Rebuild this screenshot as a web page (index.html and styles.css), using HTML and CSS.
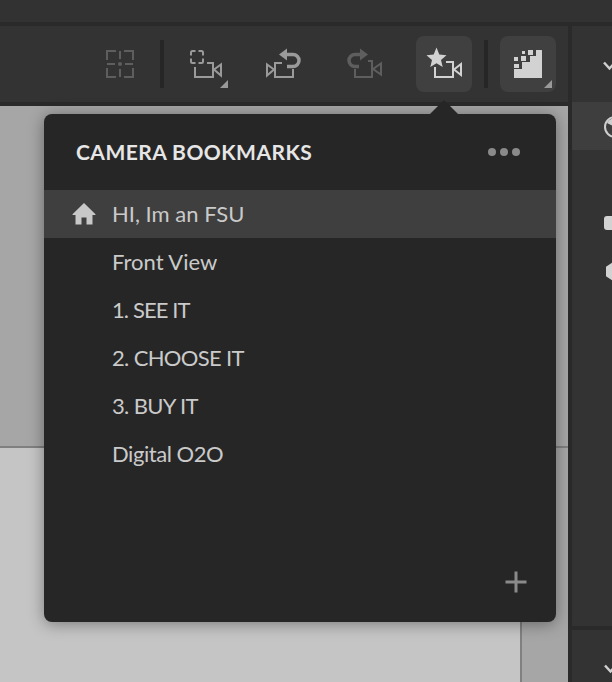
FILE: index.html
```html
<!DOCTYPE html>
<html lang="en">
<head>
<meta charset="utf-8">
<title>Camera Bookmarks</title>
<link rel="stylesheet" href="styles.css">
</head>
<body>
<div class="app">
  <div class="topbar"></div>
  <div class="workspace">
    <div class="main">
      <div class="toolbar">
        <button class="tool"><svg class="ico off" viewBox="0 0 56 56"><path d="M15 24V15H24M32 15H41V24M41 32V41H32M24 41H15V32M28 15V23M28 33V41M15 28H23M33 28H41"/><circle class="fill" cx="28" cy="28" r="2"/></svg></button>
        <span class="sep"></span>
        <button class="tool"><svg class="ico" viewBox="0 0 56 56"><path d="M15 19.500V16.500A1.500 1.500 0 0 1 16.500 15H19.500M22.500 15H25.500A1.500 1.500 0 0 1 27 16.500V19.500M27 22.500V25.500A1.500 1.500 0 0 1 25.500 27H22.500M19.500 27H16.500A1.500 1.500 0 0 1 15 25.500V22.500"/><path d="M19 31V41H37V27H31M38 33.500L45 28.500V39.500Z"/><path class="fill" d="M52 44V52H44Z"/></svg></button>
        <button class="tool"><svg class="ico" viewBox="0 0 56 56"><path d="M26 27H19V41H37V33M18 33.500L11 28.500V39.500Z"/><path class="thick" d="M29 18.500H37A6 6 0 0 1 37 30.500H31"/><path class="fill" d="M23 18.500L31 12.500V24.500Z"/></svg></button>
        <button class="tool"><svg class="ico off" viewBox="0 0 56 56"><path d="M19 33V41H36V25H32M37 33L45 27.500V38.500Z"/><path class="thick" d="M26 18.500H19A6 6 0 0 0 19 30.500H23"/><path class="fill" d="M32 18.500L24 12.500V24.500Z"/></svg></button>
        <button class="tool on"><svg class="ico bright" viewBox="0 0 56 56"><path class="fill" d="M20.500 11.500L23.300 18.600 30.500 19.200 25 24 26.700 31 20.500 27.200 14.300 31 16 24 10.500 19.200 17.700 18.600Z"/><path d="M19 31V41H37V26H30M38 33.500L45 28V39Z"/></svg></button>
        <span class="sep"></span>
        <button class="tool on"><svg class="ico bright" viewBox="0 0 56 56"><path class="fill" d="M36 14H41.500A.5.5 0 0 1 42 14.500V42H14V33H22V26H30V20H36Z"/><path class="fill" d="M28 14H33V19H28ZM22 15H25V18H22ZM14 21H18V25H14ZM21 20H26V25H21ZM14 28H19V32H14Z"/><path class="corner" d="M52 44V52H44Z"/></svg></button>
      </div>
      <div class="canvas">
        <div class="canvas-top"></div>
        <div class="canvas-bottom"><div class="page"></div></div>
      </div>
    </div>
    <aside class="inspector">
      <div class="section-head"><svg class="chevron" viewBox="0 0 16 12"><path d="M1 1.500L6.500 7.500 12 1.500"/></svg></div>
      <div class="section-row"><svg class="dial" viewBox="0 0 24 24"><circle cx="12" cy="12" r="10"/><path class="fill" d="M12 12L4 8A9 9 0 0 1 12 3Z"/></svg></div>
      <div class="section-body">
        <span class="chip"></span>
        <span class="hex"></span>
      </div>
      <div class="section-foot"><svg class="chevron" viewBox="0 0 16 12"><path d="M1 1.500L6.500 7.500 12 1.500"/></svg></div>
    </aside>
  </div>
  <section class="popover">
    <header class="pop-head">
      <h2 class="pop-title">CAMERA BOOKMARKS</h2>
      <div class="dots"><span></span><span></span><span></span></div>
    </header>
    <ul class="list">
      <li class="item selected"><svg class="home" viewBox="0 0 24 24"><path d="M12 1L23.500 12.200Q24 13 23 13H20.500V22.500H14.500V15.500H9.500V22.500H3.500V13H1Q0 13 .5 12.200Z"/></svg><span>HI, Im an FSU</span></li>
      <li class="item"><i class="slot"></i><span>Front View</span></li>
      <li class="item"><i class="slot"></i><span class="tight-more">1. SEE IT</span></li>
      <li class="item"><i class="slot"></i><span class="tight">2. CHOOSE IT</span></li>
      <li class="item"><i class="slot"></i><span class="tight">3. BUY IT</span></li>
      <li class="item"><i class="slot"></i><span class="tight-less">Digital O2O</span></li>
    </ul>
    <footer class="pop-foot"><svg class="plus" viewBox="0 0 24 24"><path d="M12 1.500V22.500M1.500 12H22.500"/></svg></footer>
  </section>
</div>
</body>
</html>
```
FILE: styles.css
```css
* { box-sizing: border-box; }
html, body { margin: 0; padding: 0; }
body { width: 612px; height: 682px; overflow: hidden; background: #2a2a2a; font-family: "Lato", "Noto Sans", sans-serif; }
.app { position: relative; width: 612px; height: 682px; display: flex; flex-direction: column; }
.topbar { height: 26px; flex: none; background: #323232; border-bottom: 4px solid #2a2a2a; }
.workspace { flex: 1; display: flex; min-height: 0; }
.main { width: 568px; flex: none; display: flex; flex-direction: column; }
.toolbar { height: 80px; flex: none; background: #333; border-bottom: 4px solid #2a2a2a; display: flex; align-items: flex-start; justify-content: flex-end; gap: 24px; padding: 10px 12px 0 0; }
.tool { width: 56px; height: 56px; padding: 0; border: 0; border-radius: 8px; background: transparent; }
.tool.on { background: #404040; }
.sep { width: 4px; height: 48px; margin: 4px -12px 0; background: #262626; }
.ico { display: block; width: 56px; height: 56px; fill: none; stroke: #9a9a9a; stroke-width: 2; }
.ico .fill { fill: #9a9a9a; stroke: none; }
.ico .thick { stroke-width: 3.500; }
.ico.off { stroke: #5e5e5e; }
.ico.off .fill { fill: #5e5e5e; }
.ico.bright { stroke: #d2d2d2; }
.ico.bright .fill { fill: #d2d2d2; }
.ico .corner { fill: #9a9a9a; stroke: none; }
.canvas { flex: 1; display: flex; flex-direction: column; background: #a6a6a6; }
.canvas-top { height: 342px; flex: none; border-bottom: 2px solid #808080; }
.canvas-bottom { flex: 1; }
.page { width: 522px; height: 100%; background: #c5c5c5; border-right: 2px solid #808080; }
.inspector { flex: 1; border-left: 4px solid #2a2a2a; display: flex; flex-direction: column; overflow: hidden; }
.section-head { height: 76px; flex: none; background: #333; padding: 35px 0 0 31px; }
.section-row { height: 48px; flex: none; background: #3e3e3e; padding: 13px 0 0 31px; }
.section-body { flex: 1; background: #333; display: flex; flex-direction: column; align-items: flex-start; padding: 66px 0 0 32px; border-bottom: 4px solid #2a2a2a; }
.section-foot { height: 52px; flex: none; background: #333; padding: 34px 0 0 32px; }
.chevron { display: block; width: 16px; height: 12px; flex: none; fill: none; stroke: #cfcfcf; stroke-width: 2.500; }
.dial { display: block; width: 24px; height: 24px; flex: none; fill: none; stroke: #cfcfcf; stroke-width: 2; }
.dial .fill { fill: #cfcfcf; stroke: none; }
.chip { display: block; width: 14px; height: 14px; flex: none; border-radius: 3px; background: #d2d2d2; }
.hex { display: block; width: 14px; height: 19px; flex: none; margin: 32px 0 0 2px; background: #d2d2d2; clip-path: polygon(50% 0, 100% 25%, 100% 75%, 50% 100%, 0 75%, 0 25%); }
.popover { position: absolute; left: 44px; top: 114px; width: 512px; height: 508px; background: #262626; border-radius: 8px; box-shadow: 0 2px 16px rgba(0, 0, 0, .38); display: flex; flex-direction: column; }
.popover::before { content: ""; position: absolute; left: 386px; top: -14px; width: 28px; height: 14px; background: #262626; clip-path: polygon(50% 0, 100% 100%, 0 100%); }
.pop-head { height: 76px; flex: none; display: flex; align-items: center; justify-content: space-between; padding: 0 36px 0 32px; }
.pop-title { margin: 0 0 2px; font-size: 21px; font-weight: 700; color: #e6e6e6; letter-spacing: .46px; }
.dots { display: flex; gap: 4px; }
.dots span { width: 8px; height: 8px; border-radius: 50%; background: #8a8a8a; }
.list { margin: 0; padding: 0; list-style: none; }
.item { height: 48px; display: flex; align-items: center; gap: 16px; padding: 0 0 2px 28px; font-size: 22px; color: #cacaca; }
.item.selected { background: #3f3f3f; }
.tight { letter-spacing: -.65px; }
.tight-more { letter-spacing: -.9px; }
.tight-less { letter-spacing: -.45px; }
.slot { display: block; width: 24px; height: 24px; flex: none; }
.home { display: block; width: 24px; height: 24px; flex: none; margin-top: 2px; fill: #c8c8c8; }
.pop-foot { margin-top: auto; display: flex; justify-content: flex-end; padding: 0 28px 28px 0; }
.plus { display: block; width: 24px; height: 24px; fill: none; stroke: #8a8a8a; stroke-width: 3; }
```
